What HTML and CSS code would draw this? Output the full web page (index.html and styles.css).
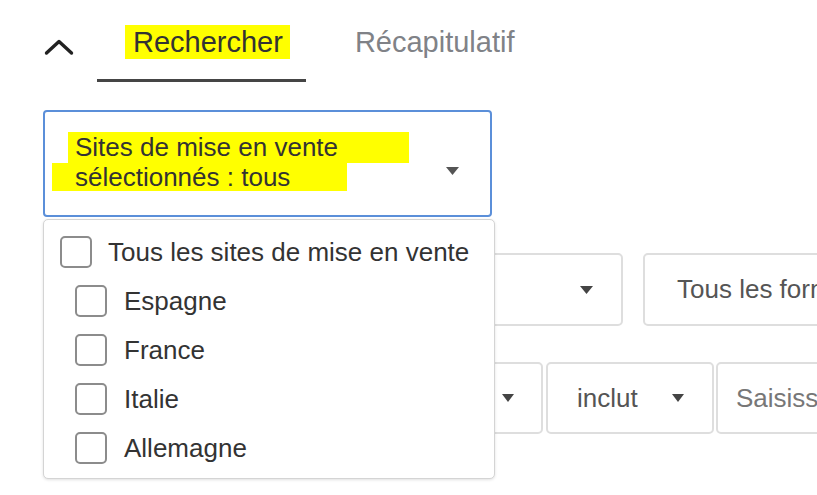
FILE: index.html
```html
<!DOCTYPE html>
<html lang="fr">
<head>
<meta charset="utf-8">
<title>Rechercher</title>
<link rel="stylesheet" href="styles.css">
</head>
<body>
<div class="page">
  <div class="tabs">
    <button class="collapse" aria-label="Réduire">
      <svg width="30" height="18" viewBox="0 0 30 18"><polyline points="2.5,15 15,3.5 27.5,15" fill="none" stroke="#222" stroke-width="3.4" stroke-linecap="round" stroke-linejoin="round"/></svg>
    </button>
    <div class="tab active"><span class="tab-label hl">Rechercher</span></div>
    <div class="tab second"><span class="tab-label">Récapitulatif</span></div>
  </div>

  <div class="picker">
    <div class="select">
      <div class="select-text">
        <span class="line1 hl">Sites de mise en vente</span>
        <span class="line2 hl">sélectionnés : tous</span>
      </div>
      <svg class="caret big" width="13" height="8" viewBox="0 0 13 8"><polygon points="0,0 13,0 6.5,8" fill="#555"/></svg>
    </div>

    <div class="panel">
      <label class="item"><span class="box"></span><span>Tous les sites de mise en vente</span></label>
      <label class="item sub"><span class="box"></span><span>Espagne</span></label>
      <label class="item sub"><span class="box"></span><span>France</span></label>
      <label class="item sub"><span class="box"></span><span>Italie</span></label>
      <label class="item sub"><span class="box"></span><span>Allemagne</span></label>
    </div>
  </div>

  <div class="filters">
    <div class="row row1">
      <div class="field f1"><svg class="caret" width="13" height="8" viewBox="0 0 13 8"><polygon points="0,0 13,0 6.5,8" fill="#444"/></svg></div>
      <div class="field f2"><span class="ph">Tous les formats</span></div>
    </div>
    <div class="row row2">
      <div class="field f3"><svg class="caret" width="12" height="8" viewBox="0 0 12 8"><polygon points="0,0 12,0 6,8" fill="#444"/></svg></div>
      <div class="field f4"><span class="ph">inclut</span><svg class="caret" width="12" height="8" viewBox="0 0 12 8"><polygon points="0,0 12,0 6,8" fill="#444"/></svg></div>
      <div class="field f5"><span class="ph light">Saisissez un mot-clé</span></div>
    </div>
  </div>
</div>
</body>
</html>
```

FILE: styles.css
```css
html, body {
  margin: 0;
  padding: 0;
  background: #fff;
  overflow: hidden;
}

body {
  font-family: "Liberation Sans", Arial, sans-serif;
  color: #333;
}

.page {
  width: 817px;
  height: 495px;
  box-sizing: border-box;
  padding-left: 43px;
  overflow: hidden;
}

.hl {
  background: #ffff00;
}

/* Tabs */
.tabs {
  display: flex;
  align-items: flex-start;
  height: 82px;
}

.collapse {
  width: 30px;
  height: 18px;
  margin: 38px 23px 0 1px;
  padding: 0;
  border: 0;
  background: none;
  display: block;
}

.collapse svg {
  display: block;
}

.tab {
  padding: 25px 16px 20px 28px;
  font-size: 29px;
  line-height: 34px;
  border-bottom: 3px solid transparent;
  color: #808287;
}

.tab.active {
  border-bottom-color: #454545;
  color: #333;
}

.tab.second {
  margin-left: 13px;
}

.tab-label {
  display: inline-block;
  padding: 0 7px 0 8px;
}

/* Site picker */
.picker {
  position: relative;
  width: 449px;
  margin-top: 28px;
}

.select {
  box-sizing: border-box;
  width: 449px;
  height: 107px;
  border: 2px solid #5b8fd9;
  border-radius: 4px;
  display: flex;
  justify-content: space-between;
  align-items: flex-start;
  padding: 20px 31px 0 7px;
  font-size: 26px;
}

.select-text {
  display: flex;
  flex-direction: column;
}

.line1 {
  display: block;
  box-sizing: border-box;
  margin-left: 16px;
  padding-left: 7px;
  width: 341px;
  height: 31px;
  line-height: 31px;
}

.line2 {
  display: block;
  box-sizing: border-box;
  padding-left: 23px;
  width: 295px;
  height: 28px;
  line-height: 28px;
}

.caret {
  display: block;
  flex-shrink: 0;
}

.caret.big {
  margin-top: 35px;
}

.panel {
  position: absolute;
  top: calc(100% + 2px);
  left: 0;
  width: 452px;
  box-sizing: border-box;
  border: 1px solid #d4d4d4;
  border-radius: 5px;
  background: #fff;
  box-shadow: 0 1px 3px rgba(0, 0, 0, 0.12);
  padding: 7px 0 6px;
  z-index: 2;
}

.item {
  display: flex;
  align-items: center;
  height: 49px;
  padding-left: 16px;
  gap: 16px;
  font-size: 26px;
  line-height: 30px;
  color: #333;
}

.item.sub {
  padding-left: 31px;
  gap: 17px;
}

.box {
  width: 32px;
  height: 32px;
  box-sizing: border-box;
  border: 2px solid #8c8c8c;
  border-radius: 5px;
  flex-shrink: 0;
  background: #fff;
}

/* Background filters */
.filters {
  margin-top: 36px;
  display: flex;
  flex-direction: column;
  gap: 36px;
}

.row {
  display: flex;
}

.field {
  box-sizing: border-box;
  flex-shrink: 0;
  border: 2px solid #dedede;
  border-radius: 5px;
  display: flex;
  align-items: center;
  font-size: 26px;
  color: #555;
}

.row1 .field {
  height: 73px;
}

.row2 .field {
  height: 72px;
}

.f1 {
  width: 580px;
  justify-content: flex-end;
  padding-right: 28px;
}

.f2 {
  width: 300px;
  margin-left: 20px;
  padding-left: 32px;
}

.f3 {
  width: 500px;
  justify-content: flex-end;
  padding-right: 27px;
}

.f4 {
  width: 168px;
  margin-left: 3px;
  padding: 0 28px 0 29px;
  justify-content: space-between;
}

.f5 {
  width: 300px;
  margin-left: 2px;
  padding-left: 18px;
}

.ph.light {
  color: #777;
}
```
